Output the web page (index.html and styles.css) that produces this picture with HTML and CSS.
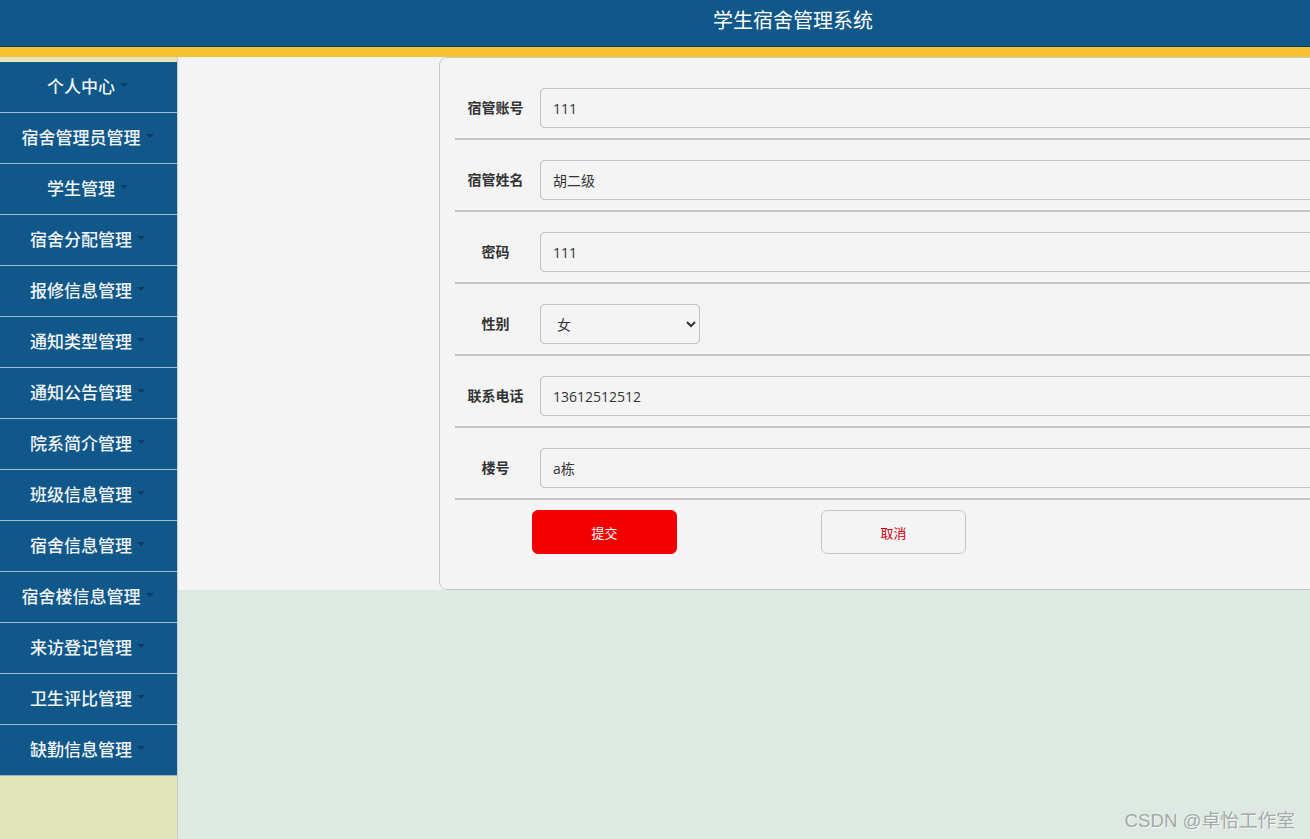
FILE: index.html
```html
<!DOCTYPE html>
<html lang="zh">
<head>
<meta charset="utf-8">
<title>学生宿舍管理系统</title>
<link rel="stylesheet" href="styles.css">
</head>
<body>
<header class="topbar"><h1 class="title">学生宿舍管理系统</h1></header>
<div class="stripe"></div>
<div class="layout">
  <nav class="sidebar">
    <ul class="menu">
      <li class="item">个人中心<span class="caret"></span></li>
      <li class="item">宿舍管理员管理<span class="caret"></span></li>
      <li class="item">学生管理<span class="caret"></span></li>
      <li class="item">宿舍分配管理<span class="caret"></span></li>
      <li class="item">报修信息管理<span class="caret"></span></li>
      <li class="item">通知类型管理<span class="caret"></span></li>
      <li class="item">通知公告管理<span class="caret"></span></li>
      <li class="item">院系简介管理<span class="caret"></span></li>
      <li class="item">班级信息管理<span class="caret"></span></li>
      <li class="item">宿舍信息管理<span class="caret"></span></li>
      <li class="item">宿舍楼信息管理<span class="caret"></span></li>
      <li class="item">来访登记管理<span class="caret"></span></li>
      <li class="item">卫生评比管理<span class="caret"></span></li>
      <li class="item">缺勤信息管理<span class="caret"></span></li>
    </ul>
  </nav>
  <main class="content">
    <div class="frame">
      <form class="panel">
        <div class="row"><label class="label">宿管账号</label><input class="field" type="text" value="111"></div>
        <div class="row"><label class="label">宿管姓名</label><input class="field" type="text" value="胡二级"></div>
        <div class="row"><label class="label">密码</label><input class="field" type="text" value="111"></div>
        <div class="row"><label class="label">性别</label><select class="field select"><option>女</option><option>男</option></select></div>
        <div class="row"><label class="label">联系电话</label><input class="field" type="text" value="13612512512"></div>
        <div class="row"><label class="label">楼号</label><input class="field" type="text" value="a栋"></div>
        <div class="actions">
          <button type="button" class="btn btn-submit">提交</button>
          <button type="button" class="btn btn-cancel">取消</button>
        </div>
      </form>
    </div>
    <div class="watermark">CSDN @卓怡工作室</div>
  </main>
</div>
</body>
</html>
```
FILE: styles.css
```css
* { box-sizing: border-box; }
html, body { height: 100%; }
body {
  margin: 0;
  overflow: hidden;
  background: #dde9e2;
  font-family: "Open Sans", "Noto Sans CJK SC", sans-serif;
  color: #333;
}
.topbar {
  height: 47px;
  background: #10578a;
  border-bottom: 1px solid #0b3f5e;
  padding-left: 276px;
}
.title {
  margin: 0;
  text-align: center;
  font-family: "Noto Sans CJK SC", sans-serif;
  font-size: 20px;
  font-weight: 400;
  line-height: 40px;
  color: #fff;
}
.stripe {
  height: 10px;
  background: #f3c131;
}
.layout {
  display: flex;
  height: calc(100% - 57px);
}
.sidebar {
  width: 178px;
  flex: none;
  background: #e2e4bc;
  border-right: 1px solid #c8cdd0;
  padding-top: 5px;
}
.menu {
  list-style: none;
  margin: 0;
  padding: 0;
}
.item {
  height: 51px;
  background: #10578a;
  border-bottom: 1px solid #a4bcd0;
  display: flex;
  align-items: center;
  justify-content: center;
  color: #f2f5f8;
  font-family: "Noto Sans CJK SC", sans-serif;
  font-size: 17px;
  font-weight: 500;
  padding: 0 2px 3px 0;
}
.item:last-child { border-bottom-color: #9db0c0; }
.caret {
  display: inline-block;
  width: 0;
  height: 0;
  margin-left: 5px;
  border-top: 4px solid #0b3c63;
  border-left: 4px solid transparent;
  border-right: 4px solid transparent;
  position: relative;
  top: -1px;
}
.content {
  flex: 1;
  position: relative;
  overflow: hidden;
}
.frame {
  height: 533px;
  background: #f4f4f4;
  padding-left: 261px;
}
.panel {
  width: 1000px;
  height: 533px;
  border: 1px solid #c8c8c8;
  border-radius: 8px;
  padding: 10px 0 0 15px;
  background: #f4f4f4;
}
.row {
  display: flex;
  align-items: center;
  padding: 20px 0 10px;
  border-bottom: 2px solid #c6c6c6;
}
.label {
  width: 85px;
  flex: none;
  text-align: center;
  padding-right: 4px;
  font-family: "Noto Sans CJK SC", sans-serif;
  font-size: 14px;
  font-weight: 700;
  color: #333;
  position: relative;
  top: -1px;
}
.field {
  width: 820px;
  height: 40px;
  border: 1px solid #c4c4c4;
  border-radius: 4px;
  background: #f4f4f4;
  padding: 0 12px;
  font-family: "Open Sans", "Noto Sans CJK SC", sans-serif;
  font-size: 14px;
  color: #333;
  outline: none;
}
.select {
  width: 160px;
  padding-left: 12px;
  font-family: "Noto Sans CJK SC", sans-serif;
}
.actions {
  display: flex;
  padding-top: 10px;
  padding-left: 77px;
}
.btn {
  width: 145px;
  height: 44px;
  border-radius: 6px;
  font-family: "Noto Sans CJK SC", sans-serif;
  font-size: 13px;
  cursor: pointer;
}
.btn-submit {
  background: #f20000;
  border: 1px solid #f20000;
  color: #fff;
}
.btn-cancel {
  margin-left: 144px;
  background: #f4f4f4;
  border: 1px solid #c6c6c6;
  color: #d00010;
}
.watermark {
  position: absolute;
  right: 15px;
  bottom: 7px;
  font-family: "Liberation Sans", "Noto Sans CJK SC", sans-serif;
  font-size: 18.7px;
  color: #a4aaa8;
  text-shadow: 1px 1px 0 #f4f7f5;
}
```
